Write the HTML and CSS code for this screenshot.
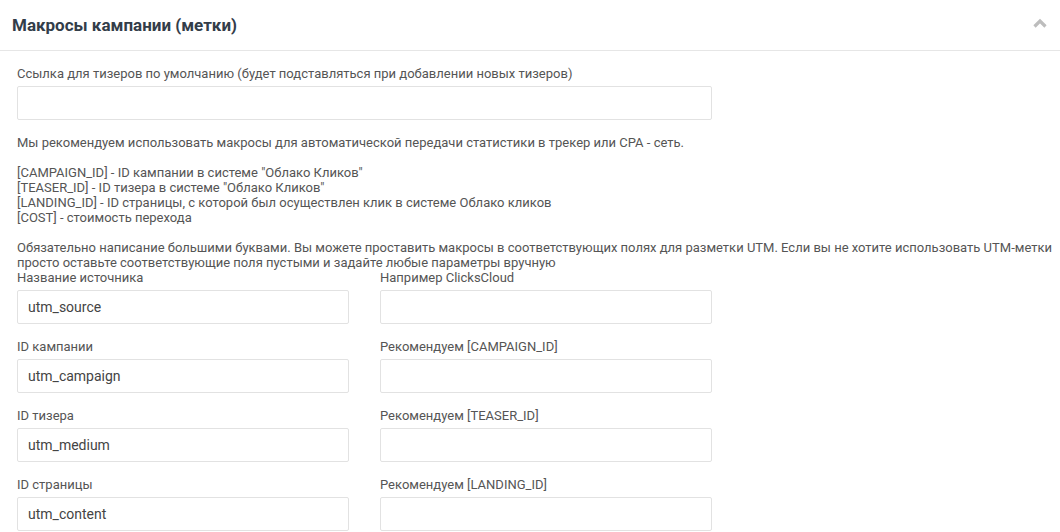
FILE: index.html
```html
<!DOCTYPE html>
<html lang="ru">
<head>
  <meta charset="UTF-8" />
  <meta name="viewport" content="width=device-width, initial-scale=1.0"/>
  <title>Макросы кампании</title>
  <link rel="stylesheet" href="styles.css">
</head>
<body>
  <section class="panel">
    <header class="panel-head">
      <h3>Макросы кампании (метки)</h3>
      <svg class="toggle" width="14" height="10" viewBox="0 0 14 10">
        <path d="M1.5 8.5 L7 3 L12.5 8.5" fill="none" stroke="#bdbdbd" stroke-width="3.2"/>
      </svg>
    </header>

    <div class="panel-body">
      <div class="field wide">
        <label for="defaultUrl">Ссылка для тизеров по умолчанию (будет подставляться при добавлении новых тизеров)</label>
        <input type="text" id="defaultUrl" />
      </div>

      <!-- Macros help -->
      <p class="hint">
        Мы рекомендуем использовать макросы для автоматической передачи статистики в трекер или CPA - сеть.<br><br>
        [CAMPAIGN_ID] - ID кампании в системе "Облако Кликов"<br>
        [TEASER_ID] - ID тизера в системе "Облако Кликов"<br>
        [LANDING_ID] - ID страницы, с которой был осуществлен клик в системе Облако кликов<br>
        [COST] - стоимость перехода<br><br>
        Обязательно написание большими буквами. Вы можете проставить макросы в соответствующих полях для разметки UTM. Если вы не хотите использовать UTM-метки<br>
        просто оставьте соответствующие поля пустыми и задайте любые параметры вручную
      </p>

      <!-- UTM fields -->
      <div class="utm-grid">
        <div class="field">
          <label>Название источника</label>
          <input type="text" value="utm_source" />
        </div>
        <div class="field">
          <label>Например ClicksCloud</label>
          <input type="text" />
        </div>
        <div class="field">
          <label>ID кампании</label>
          <input type="text" value="utm_campaign" />
        </div>
        <div class="field">
          <label>Рекомендуем [CAMPAIGN_ID]</label>
          <input type="text" />
        </div>
        <div class="field">
          <label>ID тизера</label>
          <input type="text" value="utm_medium" />
        </div>
        <div class="field">
          <label>Рекомендуем [TEASER_ID]</label>
          <input type="text" />
        </div>
        <div class="field">
          <label>ID страницы</label>
          <input type="text" value="utm_content" />
        </div>
        <div class="field">
          <label>Рекомендуем [LANDING_ID]</label>
          <input type="text" />
        </div>
      </div>
    </div>
  </section>
</body>
</html>
```

FILE: styles.css
```css
* {
  box-sizing: border-box;
}

body {
  font-family: Roboto, 'Liberation Sans', sans-serif;
  margin: 0;
  background-color: #fff;
  color: #555;
  overflow: hidden;
}

.panel {
  background: #fff;
}

.panel-head {
  display: flex;
  justify-content: space-between;
  align-items: center;
  height: 51px;
  padding: 0 13px 0 12px;
  border-bottom: 1px solid #e6e6e6;
}

.panel-head h3 {
  margin: 0;
  font-size: 17px;
  font-weight: 700;
  color: #333d49;
}

.toggle {
  margin-top: -4px;
}

.panel-body {
  padding: 15px 17px;
}

.field {
  display: flex;
  flex-direction: column;
  gap: 5px;
  margin-bottom: 15px;
}

.field.wide {
  width: 695px;
}

.field label {
  font-size: 13px;
  line-height: 15px;
  color: #555;
}

.field input {
  height: 34px;
  width: 100%;
  padding: 0 10px;
  border: 1px solid #e2e2e2;
  border-radius: 2px;
  font-family: inherit;
  font-size: 14px;
  color: #444;
  background: #fff;
}

.hint {
  margin: 0;
  font-size: 13px;
  line-height: 15px;
  color: #555;
  white-space: nowrap;
}

.utm-grid {
  display: grid;
  grid-template-columns: 332px 332px;
  column-gap: 31px;
}
```
